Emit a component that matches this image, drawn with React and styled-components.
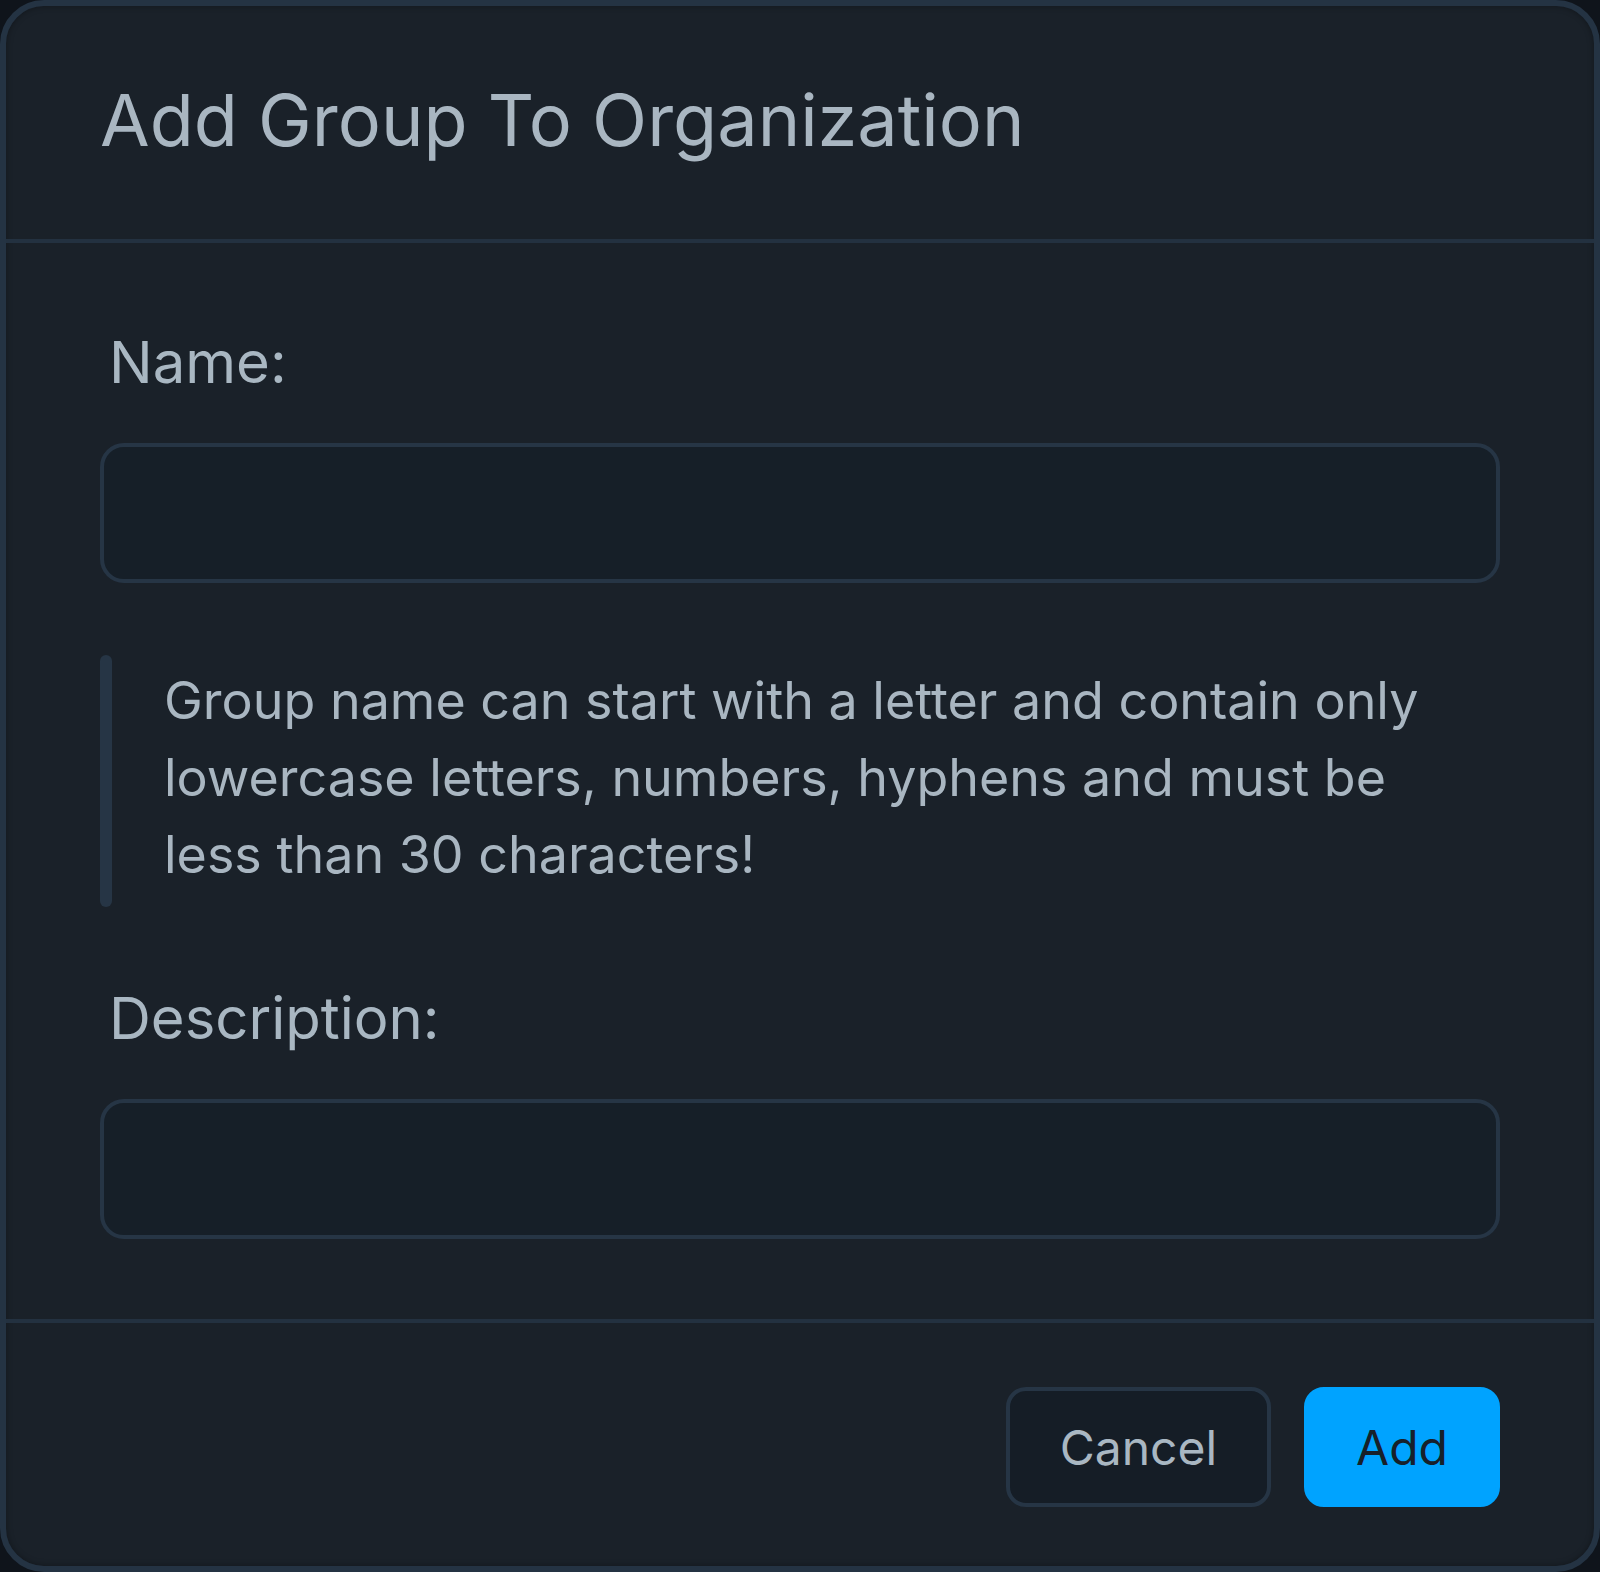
import React from "react";
import styled, { createGlobalStyle } from "styled-components";

const Global = createGlobalStyle`
  html, body {
    margin: 0;
    padding: 0;
    background: #0f141b;
  }
  * { box-sizing: border-box; }
  body {
    font-family: Inter, "Noto Sans", "Liberation Sans", sans-serif;
  }
`;

const Modal = styled.div`
  width: 1600px;
  height: 1572px;
  display: flex;
  flex-direction: column;
  background: #1a2129;
  border: 6px solid #243343;
  border-radius: 44px;
  box-shadow: inset 0 0 6px rgba(0, 0, 0, 0.35);
  overflow: hidden;
`;

const Header = styled.header`
  padding: 71px 94px 76px;
  border-bottom: 4px solid #233140;
`;

const Title = styled.h1`
  margin: 0;
  font-size: 72px;
  line-height: 86px;
  font-weight: 400;
  color: #a9b6c1;
`;

const Body = styled.div`
  flex: 1;
  display: flex;
  flex-direction: column;
  padding: 84px 94px 0;
`;

const Label = styled.label`
  display: block;
  margin: ${(p) => p.$top || 0}px 0 0 9px;
  font-size: 58px;
  line-height: 70px;
  color: #a9b7c2;
`;

const Input = styled.input`
  display: block;
  width: 100%;
  height: 140px;
  margin-top: 46px;
  padding: 0 36px;
  background: #161f28;
  border: 4px solid #263545;
  border-radius: 24px;
  font-family: inherit;
  font-size: 52px;
  color: #a9b7c2;
  outline: none;
`;

const Hint = styled.div`
  display: flex;
  margin-top: 72px;
`;

const Bar = styled.div`
  flex: 0 0 12px;
  border-radius: 6px;
  background: #263545;
`;

const HintText = styled.p`
  margin: 0 0 0 52px;
  padding: 7px 52px 14px 0;
  font-size: 52px;
  line-height: 77px;
  color: #a9b6c1;
`;

const Footer = styled.footer`
  display: flex;
  justify-content: flex-end;
  gap: 33px;
  padding: 64px 94px 59px;
  border-top: 4px solid #233140;
`;

const Button = styled.button`
  height: 120px;
  padding: 0 ${(p) => (p.$primary ? 48 : 50)}px;
  border-radius: 20px;
  border: 4px solid ${(p) => (p.$primary ? "#00a3ff" : "#263545")};
  background: ${(p) => (p.$primary ? "#00a3ff" : "#151d26")};
  color: ${(p) => (p.$primary ? "#17202a" : "#a9b7c2")};
  font-family: inherit;
  font-size: 48px;
  font-weight: 400;
  cursor: pointer;
`;

export default function App() {
  return (
    <>
      <Global />
      <Modal>
        <Header>
          <Title>Add Group To Organization</Title>
        </Header>
        <Body>
          <Label>Name:</Label>
          <Input type="text" />
          <Hint>
            <Bar />
            <HintText>
              Group name can start with a letter and contain only lowercase
              letters, numbers, hyphens and must be less than 30 characters!
            </HintText>
          </Hint>
          <Label $top={76}>Description:</Label>
          <Input type="text" />
        </Body>
        <Footer>
          <Button>Cancel</Button>
          <Button $primary>Add</Button>
        </Footer>
      </Modal>
    </>
  );
}
